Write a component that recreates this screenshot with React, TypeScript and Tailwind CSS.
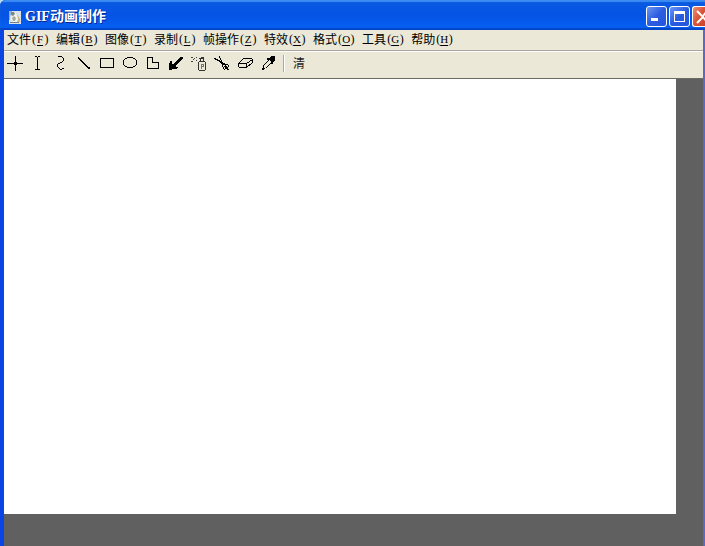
import React from 'react';

interface MenuEntry {
  label: string;
  hotkey: string;
}

interface Tool {
  name: string;
  icon: React.ReactNode;
}

const menus: MenuEntry[] = [
  { label: '文件', hotkey: 'F' },
  { label: '编辑', hotkey: 'B' },
  { label: '图像', hotkey: 'T' },
  { label: '录制', hotkey: 'L' },
  { label: '帧操作', hotkey: 'Z' },
  { label: '特效', hotkey: 'X' },
  { label: '格式', hotkey: 'O' },
  { label: '工具', hotkey: 'G' },
  { label: '帮助', hotkey: 'H' },
];

// Every icon is drawn on a 23x22 pixel grid
const tools: Tool[] = [
  {
    name: '十字',
    icon: <path d="M3 11.5H19M11.5 4V19M10 11.5H13M11.5 9V14M10.5 10V13M12.5 10V13" />,
  },
  {
    name: '文本',
    icon: <path d="M8 4.5H10M11 4.5H13M10.5 5V18M8 17.5H10M11 17.5H13" />,
  },
  {
    name: '曲线',
    icon: <path d="M8 4.5H12M12 5.5H13M13.5 6V9M12 9.5H13M10 10.5H12M8 11.5H10M7.5 12V15M8 15.5H9M9 16.5H10M10 17.5H12M12 16.5H14" />,
  },
  {
    name: '直线',
    icon: <path d="M5 5.5L17 17" strokeWidth="1.5" />,
  },
  {
    name: '矩形',
    icon: <rect x="4.5" y="6.5" width="13" height="9" />,
  },
  {
    name: '椭圆',
    icon: <path d="M8 5.5H14M6 6.5H8M14 6.5H16M5 7.5H6M16 7.5H17M4.5 8V13M17.5 8V13M5 13.5H6M16 13.5H17M6 14.5H8M14 14.5H16M8 15.5H14" />,
  },
  {
    name: '多边形',
    icon: <path d="M5.5 5.5H10.5V10.5H16.5V16.5H5.5Z" />,
  },
  {
    name: '箭头',
    icon: <path d="M4 18V11H5V9H7V12H9V11H10V10H11V9H12V8H13V7H14V6H15V5H18V7H17V8H16V9H15V10H14V11H13V12H12V13H11V15H13V16H12V17H7V18Z" fill="#000" stroke="none" />,
  },
  {
    name: '喷枪',
    icon: (
      <>
        <path d="M3 5.5H5M6 6.5H7M5 7.5H6M3 9.5H5M8 5.5H9M8 8.5H9" stroke="#444" />
        <path d="M11 6.5H16M13 5.5H16M12.5 7V10M15.5 7V10M11 9.5H17M10.5 10V18M17.5 10V18M11 18.5H17" stroke="#333" />
        <path d="M13 12.5H16M13.5 13V17M15.5 13V14M14 14.5H16" stroke="#777" />
      </>
    ),
  },
  {
    name: '剪刀',
    icon: (
      <>
        <path d="M3 6.5H5M4 7.5H7M6 8.5H9M8 9.5H11M9 10.5H12M8.5 4V6M9.5 6V8M10.5 8V10M11.5 10V12M10 11.5H14M11 12.5H14" />
        <path d="M11.5 13V15M12.5 15V17M13 17.5H14M14.5 15V17M13 14.5H14M14 12.5H17M17.5 13V15M15 15.5H17M14 13.5H15" />
        <path d="M14 14.5H16M15 16.5H17M16 17.5H18" />
      </>
    ),
  },
  {
    name: '橡皮',
    icon: <path d="M9.5 6.5H17.5L18.5 7.5V10.5L12.5 15.5H5.5L4.5 14.5V11.5L9.5 6.5M4.5 11.5H12.5L18.5 7.5M12.5 11.5V15.5" />,
  },
  {
    name: '吸管',
    icon: (
      <>
        <path d="M14 4H18V8L16 10V12H14V10L12 8H10V6H13Z" fill="#000" stroke="none" />
        <path d="M11.5 8.5L6.5 13.5V15.5L5.5 17.5L8.5 16.5L13.5 11.5" />
      </>
    ),
  },
];

const AppIcon: React.FC = () => (
  <svg viewBox="0 0 12 13" className="mt-[3px] ml-px h-[13px] w-3 shrink-0" aria-hidden="true">
    <rect width="12" height="13" fill="#dbe2e6" />
    <path d="M0 0H3L1 6V9H0Z" fill="#8fb1d8" />
    <path d="M3 3L6 1L8 5L10 8L9 11H4L2 8Z" fill="#f4f4ee" />
    <path d="M2 1H5L6 3L4 5L2 4Z" fill="#7d878a" />
    <path d="M3 7L5 5L7 7L6 10H4Z" fill="#a3aa9f" />
    <path d="M8 3L11 8L11 11H8L9 8Z" fill="#c3b78c" />
    <path d="M1 11H10V12H1Z" fill="#6f7f90" />
  </svg>
);

const captionButton =
  'flex h-[21px] shrink-0 items-center rounded-[3px] border border-white bg-linear-to-br';

const TitleBar: React.FC = () => (
  <header className="flex h-[30px] items-center overflow-hidden bg-linear-to-b from-[#0a5be0] via-[#0553e4] via-50% to-[#0762f5] pl-2 pt-[2px] shadow-[inset_0_2px_1px_#3d8cf4,inset_0_-2px_1px_#0347c8]">
    <AppIcon />
    <h1 className="mt-[2px] ml-1 flex-1 whitespace-nowrap font-['Liberation_Serif','Noto_Sans_CJK_SC',serif] text-[14px] leading-5 font-bold text-white [text-shadow:1px_1px_#06278f]">
      GIF动画制作
    </h1>
    <div className="flex gap-[2px]">
      <button aria-label="最小化" className={`${captionButton} w-[21px] from-[#6d96f3] via-[#2a5be0] to-[#2456dc]`}>
        <span className="mt-[7px] ml-1 h-[3px] w-[7px] bg-white" />
      </button>
      <button aria-label="最大化" className={`${captionButton} w-[21px] justify-center from-[#6d96f3] via-[#2a5be0] to-[#2456dc]`}>
        <span className="h-[11px] w-[11px] border border-t-[3px] border-white" />
      </button>
      <button aria-label="关闭" className={`${captionButton} w-[13px] rounded-r-none border-r-0 from-[#ee8c70] via-[#d9553a] to-[#c9432a]`}>
        <svg viewBox="0 0 12 19" className="h-[19px] w-3" fill="none" stroke="#fff" strokeWidth="2">
          <path d="M4 4L10 10L4 16M14 4L10 9M10 10L14 15" />
        </svg>
      </button>
    </div>
  </header>
);

const MenuBar: React.FC = () => (
  <nav className="flex h-5 items-start gap-[7px] overflow-hidden pl-[3px] font-['Noto_Sans_CJK_SC',sans-serif] text-[12px] leading-[18px] text-black">
    {menus.map((menu) => (
      <button key={menu.hotkey} className="flex shrink-0 items-center">
        {menu.label}
        <span className="flex font-['Liberation_Serif',serif] text-[12px] leading-[18px]">
          <span className="w-[5px] text-right">(</span>
          <span className="flex w-2 justify-center text-[11px] underline underline-offset-2">{menu.hotkey}</span>
          <span className="w-[5px]">)</span>
        </span>
      </button>
    ))}
  </nav>
);

const ToolBar: React.FC = () => (
  <div role="toolbar" className="flex h-[28px] border-t border-b border-t-white border-b-[#6b6a66]">
    {tools.map((tool) => (
      <button key={tool.name} aria-label={tool.name} title={tool.name} className="h-[22px] w-[23px] shrink-0">
        <svg viewBox="0 0 23 22" className="h-[22px] w-[23px]" fill="none" stroke="#000" shapeRendering="crispEdges">
          {tool.icon}
        </svg>
      </button>
    ))}
    <span className="mt-[3px] ml-[3px] h-[17px] w-[2px] border-l border-l-[#aca899] bg-white" />
    <button className="ml-2 h-[22px] font-['Noto_Sans_CJK_SC',sans-serif] text-[12px] leading-[22px] text-[#222]">
      清
    </button>
  </div>
);

const App: React.FC = () => {
  return (
    <div className="flex min-h-screen flex-col bg-[#b9dcf0]">
      <div className="flex flex-1 flex-col overflow-hidden rounded-tl-md bg-[#0a3fe0]">
        <TitleBar />
        <div className="flex flex-1 flex-col border-r-2 border-l-4 border-r-[#5b68c4] border-l-[#0a45e4]">
          <div className="bg-[#ebe8d8]">
            <MenuBar />
            <div className="h-px bg-[#aca899]" />
            <ToolBar />
          </div>
          <main className="flex flex-1 bg-[#606060] pr-[27px] pb-8">
            <div className="flex-1 bg-white" />
          </main>
        </div>
      </div>
    </div>
  );
};

export default App;
